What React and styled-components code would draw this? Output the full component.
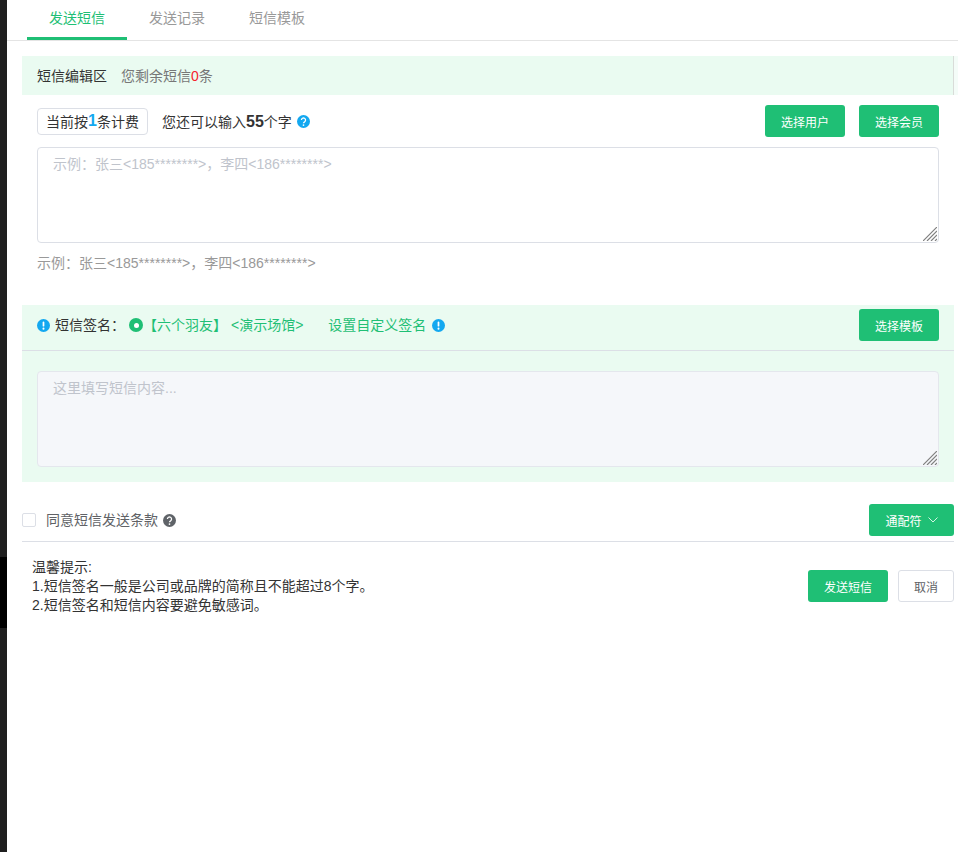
import React from 'react';
import styled, { createGlobalStyle } from 'styled-components';

const GlobalStyle = createGlobalStyle`
  html, body {
    margin: 0;
    padding: 0;
    background: #fff;
    font-family: "Liberation Sans", "Noto Sans CJK SC", sans-serif;
    font-size: 14px;
    color: #333;
  }
  * { box-sizing: border-box; }
`;

const Page = styled.div`
  display: flex;
  width: 958px;
  height: 852px;
  overflow: hidden;
`;

const SideStrip = styled.div`
  width: 7px;
  flex: none;
  display: flex;
  flex-direction: column;
  background: #1f1f1f;
`;

const StripGap = styled.div`
  height: 71px;
  margin-top: 557px;
  background: #000;
`;

const Main = styled.div`
  flex: 1;
  min-width: 0;
`;

const Tabs = styled.div`
  display: flex;
  height: 41px;
  padding-left: 20px;
  border-bottom: 1px solid #e4e4e4;
`;

const Tab = styled.div`
  width: 100px;
  height: 40px;
  line-height: 36px;
  text-align: center;
  color: ${(p) => (p.$active ? '#1fbf75' : '#999')};
  border-bottom: ${(p) => (p.$active ? '3px solid #1fbf75' : 'none')};
`;

const Body = styled.div`
  padding: 15px 4px 0 15px;
`;

const EditorHead = styled.div`
  margin-right: -4px;
  padding-right: 4px;
  background: #f4fcf8;
`;

const HeadMain = styled.div`
  display: flex;
  align-items: center;
  gap: 14px;
  height: 39px;
  padding: 0 0 2px 15px;
  background: #eafbf1;
  border-right: 1px solid #d9dcd9;
`;

const HeadTitle = styled.span`
  color: #333;
`;

const HeadNote = styled.span`
  color: #777;
`;

const Red = styled.span`
  color: #f5222d;
`;

const EditorBody = styled.div`
  padding: 10px 15px 0;
`;

const CountRow = styled.div`
  display: flex;
  align-items: center;
  height: 32px;
  margin-bottom: 10px;
`;

const BillTag = styled.div`
  display: flex;
  align-items: center;
  justify-content: center;
  width: 111px;
  height: 27px;
  margin-right: 14px;
  border: 1px solid #dcdfe6;
  border-radius: 4px;
  color: #333;
`;

const BlueNum = styled.b`
  color: #13a8f0;
  font-size: 16px;
`;

const CountText = styled.span`
  color: #333;
  margin-right: 5px;
`;

const BigNum = styled.b`
  font-size: 16px;
`;

const Spacer = styled.div`
  flex: 1;
`;

const GreenButton = styled.button`
  display: inline-flex;
  align-items: center;
  justify-content: center;
  gap: 6px;
  width: ${(p) => p.$width || 80}px;
  height: 32px;
  margin-left: ${(p) => p.$gap || 0}px;
  padding: 0;
  border: none;
  border-radius: 3px;
  background: #1fbf75;
  color: #fff;
  font: inherit;
  font-size: 12px;
`;

const PlainButton = styled.button`
  width: 56px;
  height: 32px;
  margin-left: 10px;
  padding: 0;
  border: 1px solid #dcdfe6;
  border-radius: 3px;
  background: #fff;
  color: #606266;
  font: inherit;
  font-size: 12px;
`;

const AreaWrap = styled.div`
  position: relative;
  height: 96px;
`;

const TextArea = styled.textarea`
  display: block;
  width: 100%;
  height: 100%;
  padding: 6px 15px;
  border: 1px solid ${(p) => (p.disabled ? '#e4e7ed' : '#dcdfe6')};
  border-radius: 4px;
  background: ${(p) => (p.disabled ? '#f5f7fa' : '#fff')};
  font: inherit;
  line-height: 20px;
  outline: none;
  resize: none;

  &::placeholder {
    color: #c0c4cc;
    opacity: 1;
  }
`;

const Grip = styled.svg`
  position: absolute;
  right: 2px;
  bottom: 2px;
`;

const InputHint = styled.div`
  margin-top: 10px;
  height: 20px;
  line-height: 20px;
  color: #999;
`;

const SignBlock = styled.div`
  margin-top: 32px;
  background: #eafbf1;
`;

const SignRow = styled.div`
  display: flex;
  align-items: center;
  height: 46px;
  padding: 4px 15px 9px;
  border-bottom: 1px solid #dcdfe6;
`;

const SignLabel = styled.span`
  margin: 0 4px 2px 5px;
  color: #333;
`;

const Radio = styled.span`
  display: flex;
  align-items: center;
  justify-content: center;
  width: 14px;
  height: 14px;
  border-radius: 50%;
  background: #1fbf75;

  &::after {
    content: '';
    width: 5px;
    height: 5px;
    border-radius: 50%;
    background: #fff;
  }
`;

const GreenText = styled.span`
  color: #1fbf75;
  margin-left: ${(p) => p.$gap || 0}px;
  margin-right: ${(p) => p.$after || 0}px;
  margin-bottom: 2px;
`;

const SignEditor = styled.div`
  padding: 20px 15px 15px;
`;

const AgreeRow = styled.div`
  display: flex;
  align-items: center;
  height: 60px;
  padding: 22px 0 5px;
  border-bottom: 1px solid #dcdfe6;
`;

const Check = styled.span`
  width: 14px;
  height: 14px;
  margin-right: 10px;
  border: 1px solid #dcdfe6;
  border-radius: 2px;
  background: #fff;
`;

const AgreeText = styled.span`
  color: #606266;
  margin: 0 5px 2px 0;
`;

const Footer = styled.div`
  display: flex;
  align-items: flex-start;
  padding: 16px 0 0 10px;
`;

const Tips = styled.div`
  line-height: 19px;
  color: #333;
`;

const FooterActions = styled.div`
  display: flex;
  margin-top: 12px;
`;

const Dot = ({ mark, color = '#13a8f0', size = 13 }) => (
  <svg width={size} height={size} viewBox="0 0 12 12" style={{ flex: 'none' }}>
    <circle cx="6" cy="6" r="6" fill={color} />
    {mark === '!' ? (
      <>
        <rect x="5.2" y="2.4" width="1.6" height="4.6" rx="0.8" fill="#fff" />
        <circle cx="6" cy="8.9" r="0.95" fill="#fff" />
      </>
    ) : (
      <>
        <path d="M4.1 4.7a1.9 1.9 0 1 1 2.9 1.6c-.7.4-1 .8-1 1.3" fill="none" stroke="#fff" strokeWidth="1.2" />
        <circle cx="6" cy="9.3" r="0.8" fill="#fff" />
      </>
    )}
  </svg>
);

const ResizeGrip = () => (
  <Grip width="14" height="14" viewBox="0 0 14 14" stroke="#808080" strokeWidth="1.2">
    <path d="M0 14 14 0M4 14 14 4M8 14 14 8M12 14 14 12" />
  </Grip>
);

const Caret = () => (
  <svg width="10" height="6" viewBox="0 0 10 6" fill="none" stroke="#d4f5e3" strokeWidth="1">
    <path d="M.5.5 5 5 9.5.5" />
  </svg>
);

export default function App() {
  return (
    <Page>
      <GlobalStyle />
      <SideStrip>
        <StripGap />
      </SideStrip>
      <Main>
        <Tabs>
          <Tab $active>发送短信</Tab>
          <Tab>发送记录</Tab>
          <Tab>短信模板</Tab>
        </Tabs>
        <Body>
          <EditorHead>
            <HeadMain>
              <HeadTitle>短信编辑区</HeadTitle>
              <HeadNote>您剩余短信<Red>0</Red>条</HeadNote>
            </HeadMain>
          </EditorHead>
          <EditorBody>
            <CountRow>
              <BillTag>当前按<BlueNum>1</BlueNum>条计费</BillTag>
              <CountText>您还可以输入<BigNum>55</BigNum>个字</CountText>
              <Dot mark="?" />
              <Spacer />
              <GreenButton>选择用户</GreenButton>
              <GreenButton $gap={14}>选择会员</GreenButton>
            </CountRow>
            <AreaWrap>
              <TextArea placeholder="示例：张三<185********>，李四<186********>" />
              <ResizeGrip />
            </AreaWrap>
            <InputHint>示例：张三&lt;185********&gt;，李四&lt;186********&gt;</InputHint>
          </EditorBody>
          <SignBlock>
            <SignRow>
              <Dot mark="!" />
              <SignLabel>短信签名：</SignLabel>
              <Radio />
              <GreenText>【六个羽友】</GreenText>
              <GreenText $gap={4} $after={25}>&lt;演示场馆&gt;</GreenText>
              <GreenText $after={6}>设置自定义签名</GreenText>
              <Dot mark="!" />
              <Spacer />
              <GreenButton>选择模板</GreenButton>
            </SignRow>
            <SignEditor>
              <AreaWrap>
                <TextArea disabled placeholder="这里填写短信内容..." />
                <ResizeGrip />
              </AreaWrap>
            </SignEditor>
          </SignBlock>
          <AgreeRow>
            <Check />
            <AgreeText>同意短信发送条款</AgreeText>
            <Dot mark="?" color="#5f6368" />
            <Spacer />
            <GreenButton $width={85}>通配符<Caret /></GreenButton>
          </AgreeRow>
          <Footer>
            <Tips>
              温馨提示:<br />
              1.短信签名一般是公司或品牌的简称且不能超过8个字。<br />
              2.短信签名和短信内容要避免敏感词。
            </Tips>
            <Spacer />
            <FooterActions>
              <GreenButton>发送短信</GreenButton>
              <PlainButton>取消</PlainButton>
            </FooterActions>
          </Footer>
        </Body>
      </Main>
    </Page>
  );
}
